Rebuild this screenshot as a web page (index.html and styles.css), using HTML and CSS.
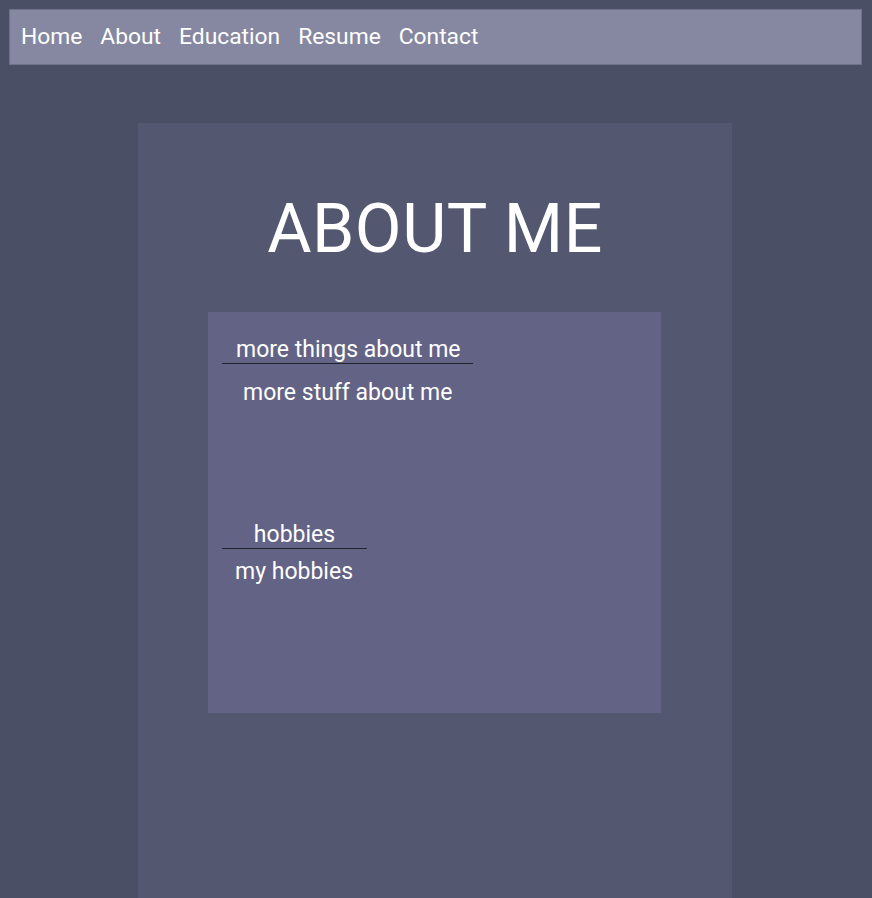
FILE: index.html
```html
<!DOCTYPE html>
<html>
<head>
<meta charset="utf-8">
<link rel="stylesheet" href="styles.css">
</head>
<body>
<nav class="nav">
  <a class="nav-link">Home</a>
  <a class="nav-link">About</a>
  <a class="nav-link">Education</a>
  <a class="nav-link">Resume</a>
  <a class="nav-link">Contact</a>
</nav>
<main class="panel">
  <h1 class="title">ABOUT ME</h1>
  <section class="card">
    <h2 class="sub sub-things">more things about me</h2>
    <p class="text text-stuff">more stuff about me</p>
    <h2 class="sub sub-hobbies">hobbies</h2>
    <p class="text text-hobbies">my hobbies</p>
  </section>
</main>
</body>
</html>
```
FILE: styles.css
```css
html, body {
  margin: 0;
  padding: 0;
  height: 100%;
}
body {
  background: #4a4f66;
  font-family: Roboto, "Liberation Sans", sans-serif;
  color: #ffffff;
  overflow: hidden;
  display: flex;
  flex-direction: column;
}
.nav {
  box-sizing: border-box;
  margin: 9px 10px 0 9px;
  height: 56px;
  background: #8588a0;
  border: 1px solid #6e7189;
  display: flex;
  align-items: center;
  gap: 18px;
  padding: 0 0 2px 11px;
}
.nav-link {
  font-size: 22.8px;
  color: #ffffff;
}
.panel {
  box-sizing: border-box;
  margin: 58px 0 0 138px;
  width: 594px;
  flex: 1;
  background: #535870;
  display: flex;
  flex-direction: column;
  padding-top: 66px;
}
.title {
  margin: 0;
  font-weight: 400;
  font-size: 68px;
  line-height: 80px;
  letter-spacing: 0.5px;
  text-align: center;
}
.card {
  box-sizing: border-box;
  margin: 43px 0 0 70px;
  width: 453px;
  height: 401px;
  background: #636385;
  display: flex;
  flex-direction: column;
  align-items: flex-start;
  padding: 24px 0 0 14px;
}
.sub {
  margin: 0;
  font-weight: 400;
  font-size: 23px;
  line-height: 27px;
  border-bottom: 1.5px solid #23232e;
}
.sub-things {
  padding: 0 12px 0 14px;
}
.text {
  margin: 0;
  font-size: 23px;
  line-height: 27px;
}
.text-stuff {
  margin: 15px 0 0 21px;
}
.sub-hobbies {
  margin-top: 115px;
  width: 145px;
  text-align: center;
}
.text-hobbies {
  margin: 8.5px 0 0 13px;
}
```
